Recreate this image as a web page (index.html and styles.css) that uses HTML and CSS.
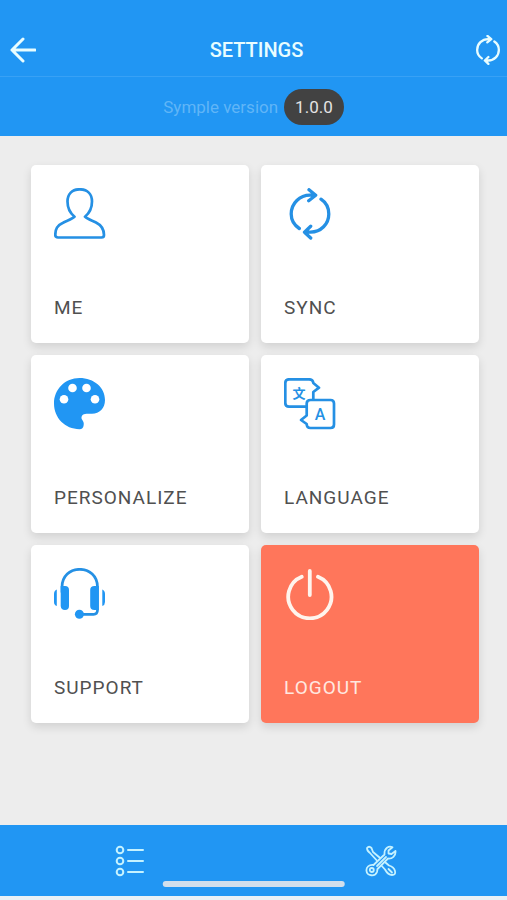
FILE: index.html
```html
<!DOCTYPE html>
<html lang="en">
<head>
<meta charset="utf-8">
<meta name="viewport" content="width=device-width, initial-scale=1">
<title>Settings</title>
<link rel="stylesheet" href="styles.css">
</head>
<body>
<svg class="defs" aria-hidden="true">
  <symbol id="sync" viewBox="0 0 52 52">
    <path d="M15.3 40.5C10 37 7.200 31.500 7.200 26C7.200 15 16 7.200 26 7.200H31M25 1.700L31.700 7.200L24.700 12.700M37 11.200C42 14.500 44.800 20 44.800 26C44.800 36 37 44 26.500 44.200H21M26.700 38.200L20.500 44.200L26.700 50"/>
  </symbol>
</svg>
<header class="header">
  <div class="topbar">
    <button class="icon-button" aria-label="Back">
      <svg class="back-icon" viewBox="0 0 26 26"><path d="M25 13H2M13 2L2 13L13 24"/></svg>
    </button>
    <h1 class="title">SETTINGS</h1>
    <button class="icon-button end" aria-label="Sync">
      <svg class="top-sync" viewBox="0 0 52 52"><use href="#sync"/></svg>
    </button>
  </div>
  <div class="version">
    <span>Symple version</span>
    <span class="badge">1.0.0</span>
  </div>
</header>
<main class="grid">
  <button class="card">
    <svg class="icon" viewBox="0 0 52 52"><path d="M20.500 28.700C16 25 13.500 20 13.500 13.500C13.500 6 18 1.300 25.700 1.300S38 6 38 13.500C38 20 35.500 25 31 28.700C33 31 38 32.500 42 34.500C48 37.500 50 41 50 47Q50 49.500 47.500 49.500H4Q1.300 49.500 1.300 47C1.300 41 3 37.500 9.500 34.500C13.500 32.500 18.500 31 20.500 28.700"/></svg>
    <span>ME</span>
  </button>
  <button class="card">
    <svg class="icon bold" viewBox="0 0 52 52"><use href="#sync"/></svg>
    <span>SYNC</span>
  </button>
  <button class="card">
    <svg class="icon" viewBox="0 0 52 52">
      <path class="solid" d="M25.500 0C40 0 51 9.500 51 22C51 30.500 45.500 35.700 38 35.700H32.500C28.500 35.700 26.500 38.500 28 41.500C29.500 43.500 30 45 29.700 47C29.300 50 28 51.200 25.500 51.200C11 51.200 0 40 0 25.600S11 0 25.500 0Z"/>
      <g class="hole"><circle cx="10" cy="21.300" r="4.300"/><circle cx="18.500" cy="10" r="4.300"/><circle cx="32.500" cy="10" r="4.300"/><circle cx="41" cy="21.300" r="4.300"/></g>
    </svg>
    <span>PERSONALIZE</span>
  </button>
  <button class="card">
    <svg class="icon" viewBox="0 0 52 52">
      <path d="M22 28.700H5Q1.300 28.700 1.300 25V5Q1.300 1.300 5 1.300H25Q29 1.300 29.300 5L35 9.700L29.300 14V21.500"/>
      <path d="M26.500 22H46.500Q50 22 50 25.500V46.500Q50 50 46.500 50H26.500Q22.700 50 22.700 46L17 42L22.700 37.500V25.500Q22.700 22 26.500 22Z"/>
      <text class="glyph cjk" x="15" y="20">文</text>
      <text class="glyph" x="36" y="42">A</text>
    </svg>
    <span>LANGUAGE</span>
  </button>
  <button class="card">
    <svg class="icon" viewBox="0 0 52 52">
      <path d="M8 24V19C8 8 16 1.300 25.700 1.300S43.500 8 43.500 19V42Q43.500 46.300 39.500 46.300H26"/>
      <g class="solid"><path d="M6.700 18H11Q15 18 15 22V38Q15 42 11 42T6.700 38ZM44.800 18H40.500Q36.200 18 36.200 22V38Q36.200 42 40.500 42H44.800Z"/><circle cx="25.400" cy="46.300" r="4.500"/><path d="M2.800 21.500V38Q0 37 0 34V26Q0 22.500 2.800 21.500ZM48.300 21.500V38Q51 37 51 34V26Q51 22.500 48.300 21.500Z"/></g>
    </svg>
    <span>SUPPORT</span>
  </button>
  <button class="card logout">
    <svg class="icon heavy" viewBox="0 0 52 52"><path d="M17.700 8.700A21.600 21.600 0 1 0 34 8.700M25.800 3V27"/></svg>
    <span>LOGOUT</span>
  </button>
</main>
<footer class="footer">
  <nav class="tabs">
    <a class="tab" href="#list" aria-label="List">
      <svg class="tab-icon" viewBox="0 0 30 32"><circle cx="5" cy="5" r="3.300"/><circle cx="5" cy="16" r="3.300"/><circle cx="5" cy="27" r="3.300"/><path d="M13 5H28M13 16H28M13 27H28"/></svg>
    </a>
    <a class="tab" href="#settings" aria-label="Settings">
      <svg class="tab-icon tools" viewBox="0 0 32 32">
        <path d="M2 3Q4 .5 6.500 3L8 7L24 20.500Q29 22 30 26Q31 30 27 30Q23 30 20 24.500L5 8Q2 6 2 3ZM23.500 24L27 27.500"/>
        <path class="wrench" d="M27.500 2.300C24 .5 19 3 19.500 9.500L8.500 20C4 19.500 1 22 1.500 26C2 31 10 32 12 27L12.500 24L23 13.500C27 14 31 11 30.500 6L26.500 9L23.500 8.500L23.500 5.500Z"/>
        <circle cx="6.800" cy="25" r="2"/><path d="M12 21L21 12"/>
      </svg>
    </a>
  </nav>
  <div class="home-indicator"></div>
</footer>
</body>
</html>
```
FILE: styles.css
```css
* { box-sizing: border-box; }

body {
  margin: 0;
  min-height: 100vh;
  display: flex;
  flex-direction: column;
  background: #ededed;
  font-family: Roboto, "Liberation Sans", sans-serif;
}

button {
  border: 0;
  background: none;
  font: inherit;
  cursor: pointer;
}

svg {
  display: block;
  fill: none;
  stroke: currentColor;
  stroke-linecap: round;
  stroke-linejoin: round;
}

.defs {
  position: absolute;
  width: 0;
  height: 0;
}

.header {
  background: #2196f3;
  color: #e8fdff;
}

.topbar {
  display: grid;
  grid-template-columns: 1fr auto 1fr;
  align-items: center;
  height: 77px;
  padding: 24px 4px 0 10px;
  border-bottom: 1px solid #38a1f5;
}

.title {
  margin: 0;
  font-size: 20px;
  font-weight: 500;
  line-height: 24px;
}

.icon-button {
  padding: 0;
  color: #e8fdff;
}

.end { justify-self: end; }

.back-icon {
  width: 26px;
  height: 26px;
  stroke-width: 3;
}

.top-sync {
  width: 30px;
  height: 30px;
  stroke-width: 4;
}

.version {
  display: flex;
  align-items: center;
  justify-content: center;
  gap: 6px;
  height: 59px;
  color: #60b5f7;
  font-size: 17px;
}

.badge {
  padding: 0 11px;
  border-radius: 18px;
  background: #424242;
  color: #e4e4e4;
  line-height: 36px;
}

.grid {
  flex: 1;
  display: grid;
  grid-template-columns: 1fr 1fr;
  align-content: start;
  gap: 12px;
  padding: 29px 28px 24px 31px;
}

.card {
  display: flex;
  flex-direction: column;
  align-items: flex-start;
  justify-content: space-between;
  height: 178px;
  padding: 23px;
  border-radius: 5px;
  background: #fff;
  box-shadow: 0 4px 10px rgba(0, 0, 0, 0.12);
  color: #505050;
  font-size: 19px;
  line-height: 24px;
  letter-spacing: 1px;
}

.icon {
  width: 52px;
  height: 52px;
  color: #2590e4;
  stroke-width: 2.7;
}

.bold { stroke-width: 3.3; }
.heavy { stroke-width: 3.8; }

.solid {
  fill: #2196f3;
  stroke: none;
}

.hole {
  fill: #fff;
  stroke: none;
}

.glyph {
  fill: currentColor;
  stroke: none;
  font-size: 16px;
  font-weight: 500;
  letter-spacing: 0;
  text-anchor: middle;
}

.cjk {
  font-family: "Noto Sans CJK SC", sans-serif;
  font-size: 13px;
  font-weight: 700;
}

.logout {
  background: #ff765b;
  color: #ffe8e0;
}

.logout .icon { color: #fff4ed; }

.footer {
  position: relative;
  background: #2196f3;
  border-bottom: 4px solid #e9f1f6;
}

.tabs {
  display: grid;
  grid-template-columns: 1fr 1fr;
  height: 71px;
  padding-left: 4px;
}

.tab {
  display: flex;
  align-items: center;
  justify-content: center;
  color: #c5f2ff;
}

.tab-icon {
  width: 30px;
  height: 32px;
  stroke-width: 2;
}

.tools {
  width: 32px;
  stroke-width: 1.8;
}

.wrench { fill: #2196f3; }

.home-indicator {
  position: absolute;
  left: 50%;
  bottom: 9px;
  width: 36%;
  height: 6px;
  border-radius: 3px;
  background: #d2dfec;
  transform: translateX(-50%);
}
```
